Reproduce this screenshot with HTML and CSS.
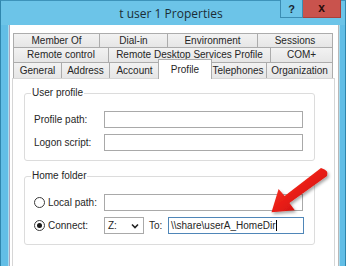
FILE: index.html
```html
<!DOCTYPE html>
<html>
<head>
<meta charset="utf-8">
<link rel="stylesheet" href="styles.css">
</head>
<body>
<div class="window">
  <div class="titlebar">
    <div></div>
    <div class="title">t user 1 Properties</div>
    <div class="caption-btns"><span class="btn-help">?</span><span class="btn-close">x</span></div>
  </div>
  <div class="client">
    <div class="tabs">
      <div class="tab-row row1">
        <span class="tab">Member Of</span><span class="tab">Dial-in</span><span class="tab">Environment</span><span class="tab">Sessions</span>
      </div>
      <div class="tab-row row2">
        <span class="tab">Remote control</span><span class="tab">Remote Desktop Services Profile</span><span class="tab">COM+</span>
      </div>
      <div class="tab-row row3">
        <span class="tab">General</span><span class="tab">Address</span><span class="tab">Account</span><span class="tab active">Profile</span><span class="tab">Telephones</span><span class="tab">Organization</span>
      </div>
    </div>
    <div class="panel">
      <div class="group group-profile">
        <div class="legend">User profile</div>
        <div class="field-row">
          <span class="label">Profile path:</span><span class="textbox wide"></span>
        </div>
        <div class="field-row">
          <span class="label">Logon script:</span><span class="textbox wide"></span>
        </div>
      </div>
      <div class="group group-home">
        <div class="legend">Home folder</div>
        <div class="field-row">
          <span class="label"><span class="radio"></span>Local path:</span><span class="textbox wide"></span>
        </div>
        <div class="field-row">
          <span class="label"><span class="radio checked"></span>Connect:</span>
          <span class="combo">Z:<svg class="chev" width="8" height="6" viewBox="0 0 8 6"><polyline points="1,1.5 4,4.5 7,1.5" fill="none" stroke="#222" stroke-width="1.6"/></svg></span>
          <span class="to">To:</span>
          <span class="textbox path focused">\\share\userA_HomeDir<span class="caret"></span></span>
        </div>
      </div>
    </div>
  </div>
  <svg class="arrow" width="80" height="70" viewBox="0 0 80 70">
    <defs>
      <linearGradient id="ar" x1="0" y1="0" x2="1" y2="1">
        <stop offset="0" stop-color="#ff4a3a"/>
        <stop offset="0.5" stop-color="#e81c14"/>
        <stop offset="1" stop-color="#b50e0a"/>
      </linearGradient>
      <filter id="sh" x="-20%" y="-20%" width="150%" height="150%">
        <feDropShadow dx="1.5" dy="2" stdDeviation="1.5" flood-color="#000" flood-opacity="0.35"/>
      </filter>
    </defs>
    <path d="M61.0,8.0 L24.6,36.0 L18.6,29.0 L11.5,52.2 L34.8,50.2 L29.4,43.0 L67.0,16.0 Q69.5,10.5 61.0,8.0 Z" fill="url(#ar)" filter="url(#sh)"/>
  </svg>
</div>
</body>
</html>
```
FILE: styles.css
```css
* { box-sizing: border-box; }
html, body { margin: 0; padding: 0; }
body {
  width: 346px;
  height: 266px;
  overflow: hidden;
  font-family: "Liberation Sans Narrow", "Liberation Sans", Arial, sans-serif;
  font-size: 10px;
  color: #262626;
}
.window {
  position: relative;
  width: 346px;
  height: 266px;
  display: flex;
  flex-direction: column;
  background: #62bee6;
  border-left: 1px solid #2f86ad;
  border-right: 1px solid #2f86ad;
  border-top: 1px solid #3d93ba;
}
.titlebar {
  height: 24px;
  display: grid;
  grid-template-columns: 1fr auto 1fr;
  align-items: start;
  padding-right: 4px;
  background: #6cc4e8;
}
.title {
  font-family: "Open Sans", "Liberation Sans", sans-serif;
  font-size: 12px;
  line-height: 24px;
  color: #1b2d36;
  padding-top: 1px;
}
.caption-btns {
  justify-self: end;
  display: flex;
  margin-top: -1px;
}
.btn-help {
  width: 23px;
  height: 18px;
  border: 1px solid #3b8db3;
  border-top: none;
  background: #6cc4e8;
  font-family: "Liberation Sans", sans-serif;
  font-weight: bold;
  font-size: 11px;
  color: #1a2430;
  display: flex;
  align-items: center;
  justify-content: center;
}
.btn-close {
  width: 38px;
  height: 18px;
  background: #c9534d;
  border: 1px solid #a8403b;
  border-top: none;
  border-left: none;
  font-family: "Liberation Sans", sans-serif;
  font-weight: bold;
  font-size: 12px;
  color: #2a0d0b;
  display: flex;
  align-items: center;
  justify-content: center;
  padding-bottom: 2px;
}
.client {
  flex: 1;
  margin: 0 6px 0 8px;
  background: #fff;
  border-left: 1px solid #a9a6bd;
  border-right: 1px solid #b8b8b8;
  box-shadow: -1px 0 0 #a6dcf0, 1px 0 0 #a6dcf0;
  padding-top: 8px;
  display: flex;
  flex-direction: column;
  min-height: 0;
}
.tabs {
  padding-left: 3px;
}
.tab-row {
  display: grid;
  width: 320px;
}
.row1 { grid-template-columns: 87px 68px 90px 75px; height: 14px; }
.row2 { grid-template-columns: 96px 162px 62px; height: 15px; }
.row3 { grid-template-columns: 49px 48px 50px 50px 57px 66px; height: 16px; }
.tab {
  border-top: 1px solid #acacac;
  border-right: 1px solid #acacac;
  background: linear-gradient(#f2f2f2, #e6e6e6);
  display: flex;
  align-items: center;
  justify-content: center;
  white-space: nowrap;
  line-height: 1;
}
.tab:first-child { border-left: 1px solid #acacac; }
.row3 .tab { padding-top: 1px; }
.tab.active {
  position: relative;
  z-index: 2;
  background: #fff;
  border-left: 1px solid #acacac;
  margin: -3px -2px -1px -2px;
  padding-top: 0;
}
.panel {
  margin-left: 2px;
  width: 323px;
  flex: 1;
  border: 1px solid #d6d6d6;
  border-bottom: none;
  background: #fff;
  position: relative;
  z-index: 1;
  padding-top: 14px;
  padding-left: 11px;
}
.group {
  width: 291px;
  border: 1px solid #dcdcdc;
  border-radius: 3px;
  padding-left: 9px;
}
.group-profile { padding-bottom: 9px; }
.group-home { margin-top: 15px; padding-bottom: 10px; }
.legend {
  display: inline-block;
  margin: -7px 0 0 -3px;
  padding: 0 1px;
  background: #fff;
  line-height: 12px;
  height: 12px;
  vertical-align: top;
}
.field-row {
  display: flex;
  align-items: center;
  height: 17px;
  margin-top: 6px;
}
.group-profile .field-row:first-of-type { margin-top: 4px; }
.group-home .field-row:first-of-type { margin-top: 5px; }
.label {
  width: 70px;
  flex: none;
  display: flex;
  align-items: center;
  white-space: nowrap;
}
.textbox {
  height: 17px;
  border: 1px solid #a9a9a9;
  background: #fff;
  display: flex;
  align-items: center;
  padding-left: 2px;
  white-space: nowrap;
}
.textbox.wide { width: 199px; }
.textbox.path { width: 136px; }
.textbox.focused { border-color: #4f86b8; }
.caret {
  display: inline-block;
  width: 1px;
  height: 11px;
  background: #000;
  margin-left: 1px;
}
.radio {
  width: 11px;
  height: 11px;
  border: 1px solid #3a3a3a;
  border-radius: 50%;
  background: #fff;
  margin-right: 3px;
  display: inline-flex;
  align-items: center;
  justify-content: center;
  flex: none;
}
.radio.checked::after {
  content: "";
  width: 5px;
  height: 5px;
  border-radius: 50%;
  background: #1a1a1a;
}
.combo {
  width: 40px;
  height: 17px;
  border: 1px solid #a9a9a9;
  display: flex;
  align-items: center;
  justify-content: space-between;
  padding: 0 4px 0 3px;
  flex: none;
}
.chev { display: block; }
.to {
  margin-left: 5px;
  width: 19px;
  flex: none;
}
.arrow {
  position: absolute;
  left: 259px;
  top: 159px;
  z-index: 5;
}
```
